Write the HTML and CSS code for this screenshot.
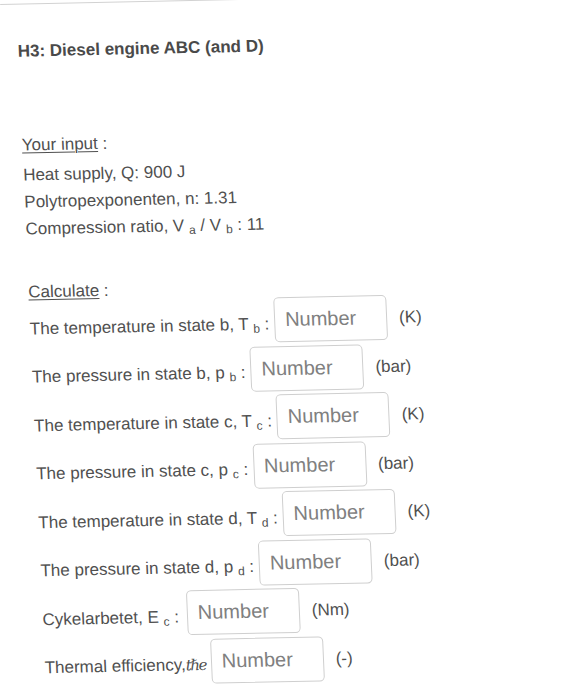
FILE: index.html
```html
<!DOCTYPE html>
<html lang="en">
<head>
<meta charset="utf-8">
<title>H3: Diesel engine ABC (and D)</title>
<link rel="stylesheet" href="styles.css">
</head>
<body>
<div class="sheet">
  <div class="topline"></div>
  <h3 class="title">H3: Diesel engine ABC (and D)</h3>

  <div class="given">
    <p class="section"><u>Your input</u> :</p>
    <p>Heat supply, Q: 900 J</p>
    <p>Polytropexponenten, n: 1.31</p>
    <p>Compression ratio, V <sub>a</sub> / V <sub>b</sub> : 11</p>
  </div>

  <p class="calc"><u>Calculate</u> :</p>

  <div class="rows">
    <div class="row"><span class="lbl">The temperature in state b, T <sub>b</sub> :</span><input class="num" type="text" placeholder="Number"><span class="unit">(K)</span></div>
    <div class="row"><span class="lbl">The pressure in state b, p <sub>b</sub> :</span><input class="num" type="text" placeholder="Number"><span class="unit">(bar)</span></div>
    <div class="row"><span class="lbl">The temperature in state c, T <sub>c</sub> :</span><input class="num" type="text" placeholder="Number"><span class="unit">(K)</span></div>
    <div class="row"><span class="lbl">The pressure in state c, p <sub>c</sub> :</span><input class="num" type="text" placeholder="Number"><span class="unit">(bar)</span></div>
    <div class="row"><span class="lbl">The temperature in state d, T <sub>d</sub> :</span><input class="num" type="text" placeholder="Number"><span class="unit">(K)</span></div>
    <div class="row"><span class="lbl">The pressure in state d, p <sub>d</sub> :</span><input class="num" type="text" placeholder="Number"><span class="unit">(bar)</span></div>
    <div class="row"><span class="lbl">Cykelarbetet, E <sub>c</sub> :</span><input class="num wide" type="text" placeholder="Number"><span class="unit">(Nm)</span></div>
    <div class="row"><span class="lbl">Thermal efficiency,<span class="math">tℏe</span></span><input class="num tight" type="text" placeholder="Number"><span class="unit">(-)</span></div>
  </div>
</div>
</body>
</html>
```

FILE: styles.css
```css
html, body {
  margin: 0;
  padding: 0;
  background: #ffffff;
}

body {
  width: 577px;
  height: 700px;
  overflow: hidden;
  font-family: "Liberation Sans", Arial, sans-serif;
  color: #505050;
}

.sheet {
  box-sizing: border-box;
  width: 520px;
  padding-left: 15.5px;
  transform-origin: 0 0;
  transform: rotate(-1.2deg) skewX(1.3deg);
}

.topline {
  width: 240px;
  height: 4px;
  margin-left: -15.5px;
  border-bottom: 1px solid #d2d2d2;
}

.title {
  margin: 37px 0 0;
  font-size: 17px;
  line-height: 20px;
  font-weight: bold;
  color: #4a4a4a;
}

.given {
  margin-top: 70px;
}

.given p {
  margin: 0;
  font-size: 17px;
  line-height: 27px;
}

.given .section {
  margin-bottom: 3px;
}

sub {
  font-size: 12px;
  vertical-align: -3px;
  line-height: 0;
}

u {
  text-decoration-thickness: 1px;
  text-underline-offset: 2px;
}

.calc {
  margin: 40px 0 0;
  font-size: 17px;
  line-height: 20px;
}

.rows {
  display: flex;
  flex-direction: column;
  gap: 3.5px;
}

.row {
  display: flex;
  align-items: center;
  height: 45px;
  font-size: 17px;
}

.lbl {
  white-space: nowrap;
  line-height: 20px;
  padding-top: 8px;
}

.math {
  font-family: "DejaVu Serif", "Liberation Serif", serif;
  font-style: italic;
  font-size: 15px;
  letter-spacing: -1.5px;
}

.num {
  box-sizing: border-box;
  width: 113px;
  height: 45px;
  margin: 0 0 0 5px;
  padding: 0 0 0 10px;
  border: 1px solid #cfcfcf;
  border-radius: 5px;
  background: #ffffff;
  font-family: "Liberation Sans", Arial, sans-serif;
  font-size: 20px;
  color: #555555;
  outline: none;
}

.num.wide {
  margin-left: 8px;
}

.num.tight {
  margin-left: 5px;
}

.num::placeholder {
  color: #808080;
  opacity: 1;
}

.unit {
  margin-left: 12px;
  margin-top: 1px;
  line-height: 20px;
}
```
